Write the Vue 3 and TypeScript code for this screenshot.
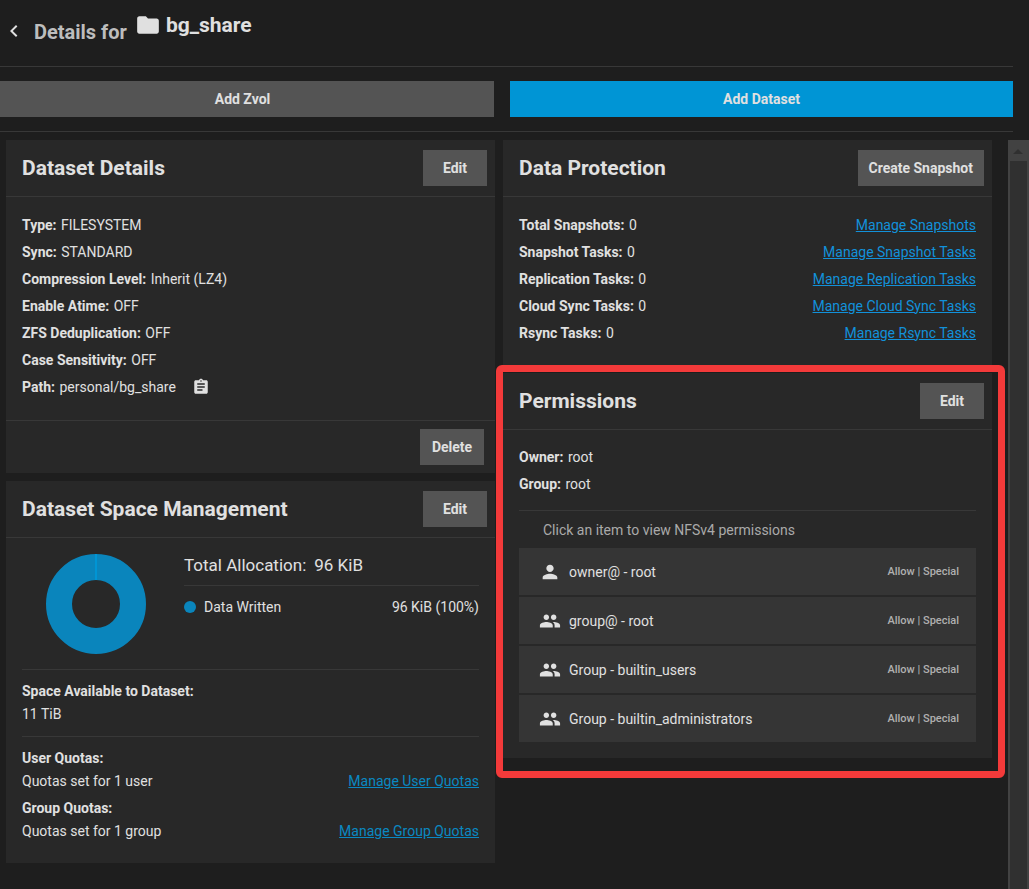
<script setup lang="ts">
interface Entry {
  label: string
  value: string
}
interface Task extends Entry {
  link: string
}
interface AclItem {
  name: string
  group: boolean
}

const details: Entry[] = [
  { label: 'Type:', value: 'FILESYSTEM' },
  { label: 'Sync:', value: 'STANDARD' },
  { label: 'Compression Level:', value: 'Inherit (LZ4)' },
  { label: 'Enable Atime:', value: 'OFF' },
  { label: 'ZFS Deduplication:', value: 'OFF' },
  { label: 'Case Sensitivity:', value: 'OFF' },
]
const tasks: Task[] = [
  { label: 'Total Snapshots:', value: '0', link: 'Manage Snapshots' },
  { label: 'Snapshot Tasks:', value: '0', link: 'Manage Snapshot Tasks' },
  { label: 'Replication Tasks:', value: '0', link: 'Manage Replication Tasks' },
  { label: 'Cloud Sync Tasks:', value: '0', link: 'Manage Cloud Sync Tasks' },
  { label: 'Rsync Tasks:', value: '0', link: 'Manage Rsync Tasks' },
]
const quotas: Task[] = [
  { label: 'User Quotas:', value: 'Quotas set for 1 user', link: 'Manage User Quotas' },
  { label: 'Group Quotas:', value: 'Quotas set for 1 group', link: 'Manage Group Quotas' },
]
const owners: Entry[] = [
  { label: 'Owner:', value: 'root' },
  { label: 'Group:', value: 'root' },
]
const acl: AclItem[] = [
  { name: 'owner@ - root', group: false },
  { name: 'group@ - root', group: true },
  { name: 'Group - builtin_users', group: true },
  { name: 'Group - builtin_administrators', group: true },
]
</script>

<template>
  <div class="page">
    <header class="top">
      <button class="icon-btn back" aria-label="Back">
        <svg width="24" height="24" viewBox="0 0 24 24"><path d="M15.4 7.4 14 6l-6 6 6 6 1.4-1.4L10.8 12z" fill="currentColor" /></svg>
      </button>
      <h1 class="title">Details for</h1>
      <div class="name">
        <svg width="26" height="26" viewBox="0 0 24 24"><path d="M10 4H4c-1.1 0-2 .9-2 2v12c0 1.1.9 2 2 2h16c1.1 0 2-.9 2-2V8c0-1.100-.9-2-2-2h-8z" fill="currentColor" /></svg>
        <span>bg_share</span>
      </div>
    </header>

    <div class="actions">
      <button class="btn">Add Zvol</button>
      <button class="btn primary">Add Dataset</button>
    </div>

    <div class="scroll-area">
      <main class="cards">
        <div class="column">
          <section class="card">
            <div class="card-head">
              <h2>Dataset Details</h2>
              <button class="btn">Edit</button>
            </div>
            <div class="card-body">
              <div v-for="d in details" :key="d.label" class="row">
                <span><b>{{ d.label }}</b> {{ d.value }}</span>
              </div>
              <div class="row path">
                <span><b>Path:</b> personal/bg_share</span>
                <button class="icon-btn" aria-label="Copy path">
                  <svg width="18" height="18" viewBox="0 0 24 24"><path d="M19 3h-4.200C14.400 1.800 13.300 1 12 1s-2.400.8-2.800 2H5c-1.100 0-2 .9-2 2v14c0 1.100.9 2 2 2h14c1.100 0 2-.9 2-2V5c0-1.100-.9-2-2-2zm-7 0c.6 0 1 .4 1 1s-.4 1-1 1-1-.4-1-1 .4-1 1-1zm2 14H7v-2h7zm3-4H7v-2h10zm0-4H7V7h10z" fill="currentColor" /></svg>
                </button>
              </div>
            </div>
            <div class="card-foot">
              <button class="btn">Delete</button>
            </div>
          </section>

          <section class="card">
            <div class="card-head">
              <h2>Dataset Space Management</h2>
              <button class="btn">Edit</button>
            </div>
            <div class="space">
              <div class="usage">
                <svg class="donut" width="100" height="100" viewBox="0 0 100 100">
                  <circle cx="50" cy="50" r="37" fill="none" stroke="#0a85bc" stroke-width="26" />
                  <path d="M50 0V26" stroke="#0095d5" stroke-width="2" />
                </svg>
                <div class="legend">
                  <h3><span>Total Allocation:</span><span>96 KiB</span></h3>
                  <div class="legend-row">
                    <i class="dot"></i>
                    <span>Data Written</span>
                    <span class="amount">96 KiB (100%)</span>
                  </div>
                </div>
              </div>
              <div class="available">
                <b>Space Available to Dataset:</b>
                <span>11 TiB</span>
              </div>
              <div class="quotas">
                <div v-for="q in quotas" :key="q.label" class="quota">
                  <b>{{ q.label }}</b>
                  <div class="quota-row">
                    <span>{{ q.value }}</span>
                    <a href="#">{{ q.link }}</a>
                  </div>
                </div>
              </div>
            </div>
          </section>
        </div>

        <div class="column">
          <section class="card">
            <div class="card-head">
              <h2>Data Protection</h2>
              <button class="btn">Create Snapshot</button>
            </div>
            <div class="card-body">
              <div v-for="t in tasks" :key="t.label" class="row">
                <span><b>{{ t.label }}</b> {{ t.value }}</span>
                <a href="#">{{ t.link }}</a>
              </div>
            </div>
          </section>

          <section class="card highlighted">
            <div class="card-head">
              <h2>Permissions</h2>
              <button class="btn">Edit</button>
            </div>
            <div class="card-body permissions">
              <div v-for="o in owners" :key="o.label" class="row">
                <span><b>{{ o.label }}</b> {{ o.value }}</span>
              </div>
              <p class="hint">Click an item to view NFSv4 permissions</p>
              <div class="acl">
                <button v-for="a in acl" :key="a.name" class="acl-item">
                  <svg v-if="a.group" width="22" height="22" viewBox="0 0 24 24"><path d="M16 11c1.660 0 2.990-1.340 2.990-3S17.660 5 16 5s-3 1.340-3 3 1.340 3 3 3zm-8 0c1.660 0 2.990-1.340 2.990-3S9.660 5 8 5 5 6.340 5 8s1.340 3 3 3zm0 2c-2.330 0-7 1.170-7 3.500V19h14v-2.500c0-2.330-4.670-3.500-7-3.500zm8 0c-.29 0-.62.02-.97.05 1.160.84 1.970 1.970 1.970 3.450V19h6v-2.500c0-2.330-4.670-3.500-7-3.500z" fill="currentColor" /></svg>
                  <svg v-else width="22" height="22" viewBox="0 0 24 24"><path d="M12 12c2.210 0 4-1.790 4-4s-1.790-4-4-4-4 1.790-4 4 1.790 4 4 4zm0 2c-2.670 0-8 1.340-8 4v2h16v-2c0-2.660-5.330-4-8-4z" fill="currentColor" /></svg>
                  <span>{{ a.name }}</span>
                  <span class="access">Allow | Special</span>
                </button>
              </div>
            </div>
          </section>
        </div>
      </main>
      <div class="scrollbar" aria-hidden="true">
        <svg width="19" height="21" viewBox="0 0 19 21"><path d="M5 14h10l-5-5z" fill="#303030" /></svg>
        <div class="thumb"></div>
      </div>
    </div>
  </div>
</template>

<style>
html,
body {
  background: #1e1e1e;
}
</style>

<style scoped>
.page {
  box-sizing: border-box;
  height: 100vh;
  display: flex;
  flex-direction: column;
  overflow: hidden;
  background: #1e1e1e;
  color: #e0e0e0;
  font: 14px/20px Roboto, "Liberation Sans", sans-serif;
}
.page * {
  box-sizing: border-box;
}
h1, h2, h3, p {
  margin: 0;
}
button {
  border: 0;
  margin: 0;
  padding: 0;
  background: none;
  color: inherit;
  font: inherit;
  cursor: pointer;
}
svg {
  display: block;
  flex: none;
}
b {
  font-weight: 700;
  margin-right: 1px;
}
a {
  color: #1291da;
  text-decoration: underline;
}
.top {
  display: flex;
  align-items: flex-start;
  height: 67px;
  margin-right: 16px;
  padding: 10px 2px;
  border-bottom: 1px solid #383838;
  flex: none;
}
.back {
  margin-top: 9px;
}
.title {
  margin: 7px 8px 0;
  font: 700 20px/30px Roboto, sans-serif;
  color: #bdbdbd;
}
.name {
  display: flex;
  align-items: center;
  gap: 5px;
  font: 700 21px/30px Roboto, sans-serif;
}
.actions {
  display: grid;
  grid-template-columns: 1fr 1fr;
  gap: 16px;
  flex: none;
  margin: 0 16px 8px -9px;
  padding: 14px 0;
  border-bottom: 1px solid #383838;
}
.btn {
  height: 36px;
  min-width: 64px;
  padding: 0 11px;
  background: #545454;
  font-weight: 700;
  white-space: nowrap;
}
.primary {
  background: #0095d5;
}
.scroll-area {
  flex: 1;
  min-height: 0;
  display: flex;
}
.cards {
  flex: 1;
  min-width: 0;
  display: grid;
  grid-template-columns: minmax(0, 1fr) minmax(0, 1fr);
  gap: 8px;
  padding: 0 16px 0 6px;
}
.column {
  display: flex;
  flex-direction: column;
  gap: 8px;
}
.card {
  position: relative;
  background: #282828;
}
.card-head {
  display: flex;
  align-items: center;
  justify-content: space-between;
  height: 57px;
  padding: 0 8px 0 16px;
  border-bottom: 1px solid #383838;
}
h2 {
  font: 700 21px/28px Roboto, sans-serif;
}
.card-body {
  padding: 14px 16px 19px;
}
.row {
  display: flex;
  align-items: center;
  justify-content: space-between;
  height: 27px;
}
.path {
  justify-content: flex-start;
  gap: 16px;
  height: 28px;
}
.card-foot {
  display: flex;
  justify-content: flex-end;
  padding: 8px 11px;
  border-top: 1px solid #383838;
}
.space {
  padding: 16px;
}
.usage {
  display: flex;
  gap: 38px;
  padding: 0 0 15px 24px;
}
.legend {
  flex: 1;
}
h3 {
  display: flex;
  gap: 8px;
  padding-bottom: 9px;
  border-bottom: 1px solid #383838;
  font: 400 17px/22px Roboto, sans-serif;
}
.legend-row {
  display: flex;
  align-items: center;
  gap: 8px;
  margin-top: 11px;
}
.dot {
  width: 12px;
  height: 12px;
  border-radius: 50%;
  background: #0a85bc;
}
.amount {
  margin-left: auto;
}
.available {
  display: flex;
  flex-direction: column;
  gap: 3px;
  padding: 11px 0 12px;
  border-top: 1px solid #383838;
}
.quotas {
  display: flex;
  flex-direction: column;
  gap: 7px;
  padding: 11px 0 6px;
  border-top: 1px solid #383838;
}
.quota-row {
  display: flex;
  justify-content: space-between;
  margin-top: 3px;
}
.quota-row a {
  color: #0a88c2;
}
.highlighted::after {
  content: "";
  position: absolute;
  inset: -8px -13px -20px -7px;
  border: 7px solid #f33a3a;
  border-radius: 6px;
  pointer-events: none;
}
.permissions {
  padding-top: 13px;
  padding-bottom: 16px;
}
.hint {
  margin-top: 13px;
  padding: 9px 24px 8px;
  border-top: 1px solid #383838;
  color: #aaa;
}
.acl {
  display: flex;
  flex-direction: column;
  gap: 2px;
}
.acl-item {
  display: flex;
  align-items: center;
  gap: 8px;
  height: 47px;
  padding: 0 17px 0 20px;
  background: #353535;
}
.access {
  margin-left: auto;
  color: #b0b0b0;
  font-size: 11px;
  font-weight: 500;
}
.scrollbar {
  display: flex;
  flex-direction: column;
  width: 21px;
  background: #424242;
}
.thumb {
  flex: 1;
  margin: 0 2px;
  background: #303030;
}
</style>
